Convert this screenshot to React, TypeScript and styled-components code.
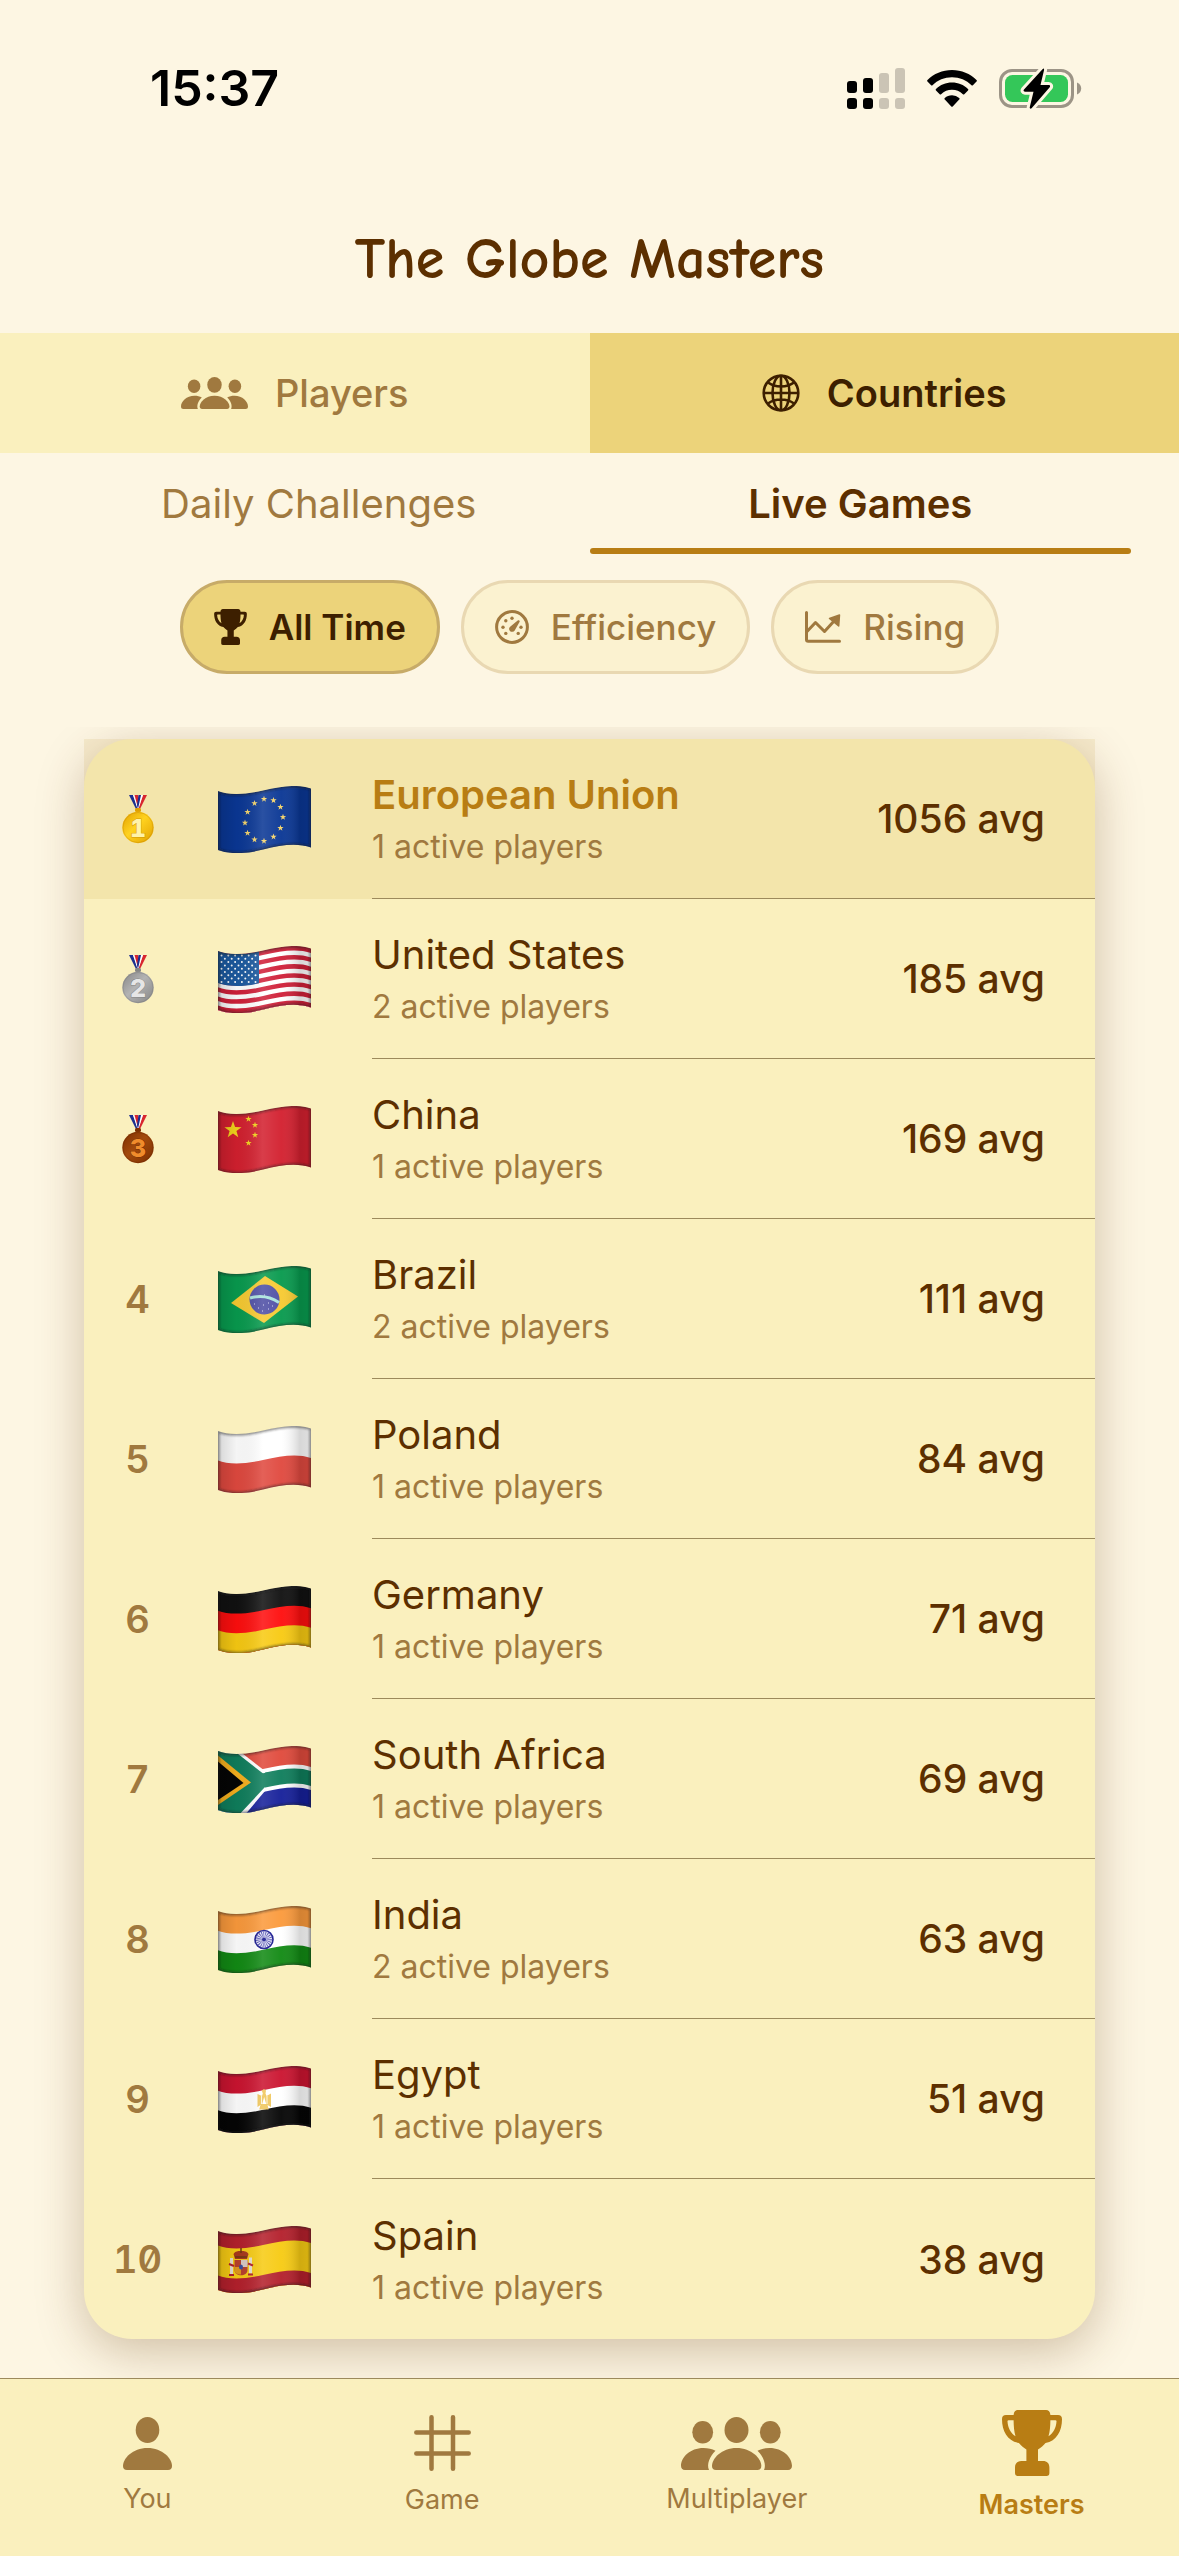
import React from 'react';
import styled, { createGlobalStyle } from 'styled-components';

const GlobalStyle = createGlobalStyle`
    *{
        box-sizing: border-box;
    }
    body{
        margin: 0;
        background: #fdf6e3;
        font-family: Inter, Roboto, "Liberation Sans", sans-serif;
        color: #5c2f00;
    }
    button{
        font: inherit;
        cursor: pointer;
    }
    svg{
        display: block;
        flex: none;
    }
`

const Page = styled.div`
    min-height: 100vh;
    display: flex;
    flex-direction: column;
`

const StatusBar = styled.div`
    display: flex;
    justify-content: space-between;
    align-items: center;
    height: 176px;
    padding: 0 97px 0 150px;
    color: #000;
`

const Clock = styled.div`
    font-size: 50px;
    font-weight: 600;
`

const StatusIcons = styled.div`
    display: flex;
    align-items: center;
    gap: 22px;
`

const Title = styled.h1`
    margin: 0;
    height: 157px;
    line-height: 168px;
    text-align: center;
    font-family: "Comic Neue", "Chalkboard SE", Lato, sans-serif;
    font-size: 58px;
    font-weight: 700;
`

const MainTabs = styled.div`
    display: grid;
    grid-template-columns: 1fr 1fr;
`

const MainTab = styled.button<{ $active?: boolean }>`
    display: flex;
    align-items: center;
    justify-content: center;
    gap: 27px;
    height: 120px;
    border: 0;
    font-size: 38px;
    font-weight: ${p => p.$active ? 600 : 500};
    color: ${p => p.$active ? '#3d1f00' : '#a0793f'};
    background: ${p => p.$active ? '#ecd37a' : '#faf0be'};
`

const SubTabs = styled.div`
    display: grid;
    grid-template-columns: 1fr 1fr;
    padding: 0 48px;
`

const SubTab = styled.button<{ $active?: boolean }>`
    height: 99px;
    padding: 26px 0 0;
    border: 0;
    background: none;
    font-size: 40px;
    font-weight: ${p => p.$active ? 600 : 400};
    color: ${p => p.$active ? '#5c2f00' : '#a0793f'};
    &::after{
        content: '';
        display: block;
        height: 6px;
        margin-top: 20px;
        border-radius: 3px;
        background: ${p => p.$active ? '#b87d14' : 'transparent'};
    }
`

const Filters = styled.div`
    display: flex;
    justify-content: center;
    gap: 21px;
    padding: 28px 0 53px;
`

const Filter = styled.button<{ $active?: boolean }>`
    display: flex;
    align-items: center;
    gap: 22px;
    height: 94px;
    padding: 0 31px;
    border: 3px solid ${p => p.$active ? '#c7ab68' : '#e9d8b2'};
    border-radius: 47px;
    font-size: 35px;
    font-weight: ${p => p.$active ? 600 : 500};
    color: ${p => p.$active ? '#3d1f00' : '#a0793f'};
    background: ${p => p.$active ? '#ecd37a' : '#fbf2d0'};
`

const Board = styled.main`
    flex: 1;
    overflow: hidden;
    padding: 12px 84px 39px;
`

const Table = styled.table`
    width: 100%;
    border-spacing: 0;
    border-radius: 48px;
    background: #faf0be;
    box-shadow: 0 12px 48px rgba(91, 46, 0, 0.28);
`

const Row = styled.tr<{ $own?: boolean }>`
    height: 160px;
    background: ${p => p.$own ? 'rgba(184, 134, 11, 0.1)' : 'none'};
    td{
        padding: 0;
    }
    &:last-child td{
        border-bottom: 0;
    }
`

const RankCell = styled.td`
    width: 107px;
    text-align: center;
    font-size: 38px;
    font-weight: 600;
    font-feature-settings: "tnum", "zero";
    color: #a0793f;
    svg{
        margin: 0 auto;
    }
`

const FlagCell = styled.td`
    width: 181px;
    svg{
        margin-left: 27px;
    }
`

const NameCell = styled.td`
    border-bottom: 1px solid #9c8a5c;
`

const Country = styled.div<{ $own?: boolean }>`
    padding-top: 3px;
    font-size: 40px;
    line-height: 48px;
    font-weight: ${p => p.$own ? 600 : 400};
    color: ${p => p.$own ? '#b87d14' : '#5c2f00'};
`

const Active = styled.div`
    margin-top: 6px;
    font-size: 32px;
    line-height: 44px;
    color: #a0793f;
`

const ScoreCell = styled.td`
    border-bottom: 1px solid #9c8a5c;
    text-align: right;
    font-size: 39px;
    font-weight: 500;
    div{
        padding-right: 50px;
    }
`

const TabBar = styled.nav`
    display: grid;
    grid-template-columns: repeat(4, 1fr);
    height: 178px;
    padding: 0 0 4px;
    border-top: 1px solid #9c8a5c;
    background: #faf0be;
`

const TabLink = styled.a<{ $active?: boolean }>`
    display: flex;
    flex-direction: column;
    align-items: center;
    justify-content: center;
    gap: 13px;
    font-size: 27px;
    line-height: 32px;
    font-weight: ${p => p.$active ? 600 : 400};
    color: ${p => p.$active ? '#b87d14' : '#a0793f'};
    text-decoration: none;
`

function SignalIcon(){
    const tops = [13, 10, 5, 0];
    return(
        <svg width="58" height="41" viewBox="0 0 58 41">
            {tops.map((top, i) => (
                <g key={i} fill={i < 2 ? '#000' : '#cbc4b5'}>
                    <rect x={i * 16} y={top} width="10" height={25 - top} rx="3" />
                    <rect x={i * 16} y="30" width="10" height="11" rx="3" />
                </g>
            ))}
        </svg>
    );
}

function WifiIcon(){
    return(
        <svg width="50" height="37" viewBox="0 0 50 37">
            <path d="M25 0C15.500 0 6.700 3.800 .5 10a1 1 0 0 0 0 1.500l3.600 3.700a1 1 0 0 0 1.400 0C10.600 10.300 17.500 7.300 25 7.300s14.400 3 19.500 7.900a1 1 0 0 0 1.400 0l3.600-3.700a1 1 0 0 0 0-1.500C43.300 3.800 34.500 0 25 0z" />
            <path d="M25 12.600c-6.200 0-11.800 2.400-16 6.400a1 1 0 0 0 0 1.500l3.700 3.700a1 1 0 0 0 1.400 0 15.800 15.800 0 0 1 21.800 0 1 1 0 0 0 1.400 0l3.700-3.700a1 1 0 0 0 0-1.500c-4.200-4-9.800-6.400-16-6.400z" />
            <path d="M25 25.300c-2.800 0-5.300 1-7.200 2.700a1 1 0 0 0 0 1.500l6.500 7a1 1 0 0 0 1.400 0l6.500-7a1 1 0 0 0 0-1.500 10.800 10.800 0 0 0-7.200-2.700z" />
        </svg>
    );
}

function BatteryIcon(){
    const bolt = 'M43.500 1.200L25 21.500c-.9 1-.3 2.200 1 2.200h8.500L30.800 39c-.4 1.700.9 2.300 2 1L50.700 19.300c.8-1 .3-2.200-1-2.200h-8.200L45 2.200c.4-1.700-.5-2.100-1.500-1z';
    return(
        <svg width="83" height="41" viewBox="0 0 83 41">
            <rect x="1.500" y="2.500" width="72" height="36" rx="11.500" fill="none" stroke="#9c9486" strokeWidth="3" />
            <path d="M78 14.500c2.500 1 4.200 3.300 4.200 6s-1.700 5-4.200 6z" fill="#9c9486" />
            <rect x="6" y="7" width="63" height="27" rx="7.500" fill="#34c759" />
            <path d={bolt} fill="#fdf6e3" stroke="#fdf6e3" strokeWidth="6" strokeLinejoin="round" />
            <path d={bolt} />
        </svg>
    );
}

function PeopleIcon({ width, height }: { width: number; height: number }){
    return(
        <svg width={width} height={height} viewBox="0 0 111 53" fill="currentColor">
            <ellipse cx="21.700" cy="15.300" rx="10.400" ry="11.300" />
            <ellipse cx="89.300" cy="15.300" rx="10.400" ry="11.300" />
            <ellipse cx="55.500" cy="13" rx="12" ry="13" />
            <path d="M35 53c-2.600 0-4-1.400-4-4 0-7.500 9.500-18 24.500-18S80.300 41.500 80.300 49c0 2.600-1.400 4-4 4z" />
            <path d="M34.500 33.800C31 32 27 31 22.500 31 9 31 0 40.500 0 48.800 0 51.500 1.400 53 4 53h24c-2.500-5.500.5-13.500 6.500-19.200z" />
            <path d="M76.500 33.800C80 32 84 31 88.500 31c13.500 0 22.500 9.500 22.500 17.800 0 2.700-1.400 4.200-4 4.200H83c2.500-5.500-.5-13.500-6.500-19.200z" />
        </svg>
    );
}

function PersonIcon(){
    return(
        <svg width="49" height="53" viewBox="0 0 49 53" fill="currentColor">
            <ellipse cx="24.500" cy="13" rx="11.800" ry="13" />
            <path d="M4 53c-2.600 0-4-1.400-4-4 0-7.500 9.500-18 24.500-18S49 41.500 49 49c0 2.600-1.400 4-4 4z" />
        </svg>
    );
}

function TrophyIcon({ width, height }: { width: number; height: number }){
    return(
        <svg width={width} height={height} viewBox="0 0 60 66" fill="currentColor">
            <path fillRule="evenodd" d="M16 0h28c2.500 0 4.200 1.800 4.400 5H56c2.600 0 4 1.400 4 4.200C60 21 54.500 31 43.500 33c-2 2.600-4.500 4.400-7.500 6.500V51h5c4 0 6.400 2.400 6.400 6.400V63c0 2-1 3-3 3H16c-2 0-3-1-3-3v-5.600c0-4 2.400-6.400 6.400-6.400h5V39.500c-3-2.100-5.500-3.900-7.500-6.500C5.500 31 0 21 0 9.200 0 6.400 1.400 5 4 5h7.600C11.800 1.800 13.500 0 16 0zM6.600 10.300c-.8 0-1.200.4-1.100 1.200.4 6 3 11.500 8 14.700C12 21.500 11.700 16 11.600 10.300zM53.400 10.300h-5c-.1 5.700-.4 11.200-1.900 15.900 5-3.200 7.600-8.700 8-14.700.1-.8-.3-1.200-1.100-1.200z" />
        </svg>
    );
}

function GlobeIcon(){
    return(
        <svg width="38" height="38" viewBox="0 0 38 38" fill="none" stroke="currentColor" strokeWidth="2.600">
            <circle cx="19" cy="19" r="17.300" />
            <ellipse cx="19" cy="19" rx="8.500" ry="17.300" />
            <path d="M19 2v34M2 19h34M6 8.500c7 5.300 19 5.300 26 0M6 29.500c7-5.300 19-5.300 26 0" />
        </svg>
    );
}

function GaugeIcon(){
    return(
        <svg width="34" height="34" viewBox="0 0 34 34" fill="currentColor">
            <circle cx="17" cy="17" r="15.400" fill="none" stroke="currentColor" strokeWidth="3" />
            <path d="M24.300 10.600c-.5-.5-1-.4-1.600 0l-7 5.600a3 3 0 1 0 4 4.200l4.800-8.300c.3-.6.300-1-.2-1.500z" />
            <circle cx="17" cy="8.200" r="1.700" />
            <circle cx="10.800" cy="10.800" r="1.700" />
            <circle cx="8" cy="17.200" r="1.700" />
            <circle cx="26" cy="17.200" r="1.700" />
            <circle cx="10.800" cy="23.400" r="1.700" />
            <circle cx="23.200" cy="23.400" r="1.700" />
        </svg>
    );
}

function RisingIcon(){
    return(
        <svg width="36" height="32" viewBox="0 0 36 32" fill="none" stroke="currentColor" strokeWidth="3" strokeLinecap="round" strokeLinejoin="round">
            <path d="M1.500 1.500v27c0 1.200.5 1.700 1.700 1.700h31.300" />
            <path d="M2 20.500l8.500-9 9 9L30 9" />
            <path d="M24.500 7.500L34.500 4l-.8 11z" fill="currentColor" strokeWidth="1.500" />
        </svg>
    );
}

function HashIcon(){
    return(
        <svg width="57" height="56" viewBox="0 0 57 56" stroke="currentColor" strokeWidth="4.500" strokeLinecap="round">
            <path d="M17.500 2.300v51.400M39 2.300v51.400M2.300 17.500h52.400M2.300 38.500h52.400" />
        </svg>
    );
}

const medals = [
    { light: '#ffd21f', dark: '#e0a000', digit: '#fff3a8', edge: '#b87800' },
    { light: '#b3b3b3', dark: '#858585', digit: '#e6e6e6', edge: '#6c6c6c' },
    { light: '#a34a0c', dark: '#7c2f02', digit: '#f08c2c', edge: '#5d2200' },
];

function Medal({ place }: { place: number }){
    const medal = medals[place - 1];
    return(
        <svg width="32" height="49" viewBox="0 0 32 49" role="img" aria-label={`Place ${place}`}>
            <defs>
                <linearGradient id={`medal${place}`} x1="0" y1="0" x2="1" y2="1">
                    <stop offset="0" stopColor={medal.dark} />
                    <stop offset="0.450" stopColor={medal.light} />
                    <stop offset="1" stopColor={medal.dark} />
                </linearGradient>
            </defs>
            <path d="M7 0h4l5 14h-2z" fill="#1d2f8f" />
            <path d="M11 0h2l3.500 12-1 2z" fill="#fff" />
            <path d="M12.500 0H16l1.500 9-1.500 4z" fill="#d8262f" />
            <path d="M25 0h-4l-5 14h2z" fill="#d8262f" />
            <path d="M21 0h-2l-3.500 12 1 2z" fill="#fff" />
            <path d="M19 0h-2.500L15 10l1 4z" fill="#1d2f8f" />
            <rect x="13" y="13" width="6" height="4" rx="1.500" fill={medal.dark} />
            <circle cx="16" cy="32.500" r="15.700" fill={`url(#medal${place})`} />
            <circle cx="16" cy="32.500" r="15" fill="none" stroke={medal.edge} strokeOpacity="0.300" strokeWidth="1" />
            <text x="16" y="41.500" textAnchor="middle" fontSize="25" fontWeight="800" fill={medal.digit} stroke={medal.edge} strokeOpacity="0.600" strokeWidth="1" paintOrder="stroke">{place}</text>
        </svg>
    );
}

// upper edge of a band that starts y below the top of the cloth
const wave = (y: number) => `M0 ${5 + y}C10 ${9 + y} 26 ${9 + y} 45 ${4.5 + y}S80 ${y - 2} 93 ${2.5 + y}`;
const cloth = 'M0 5C10 9 26 9 45 4.500S80 -2 93 2.500V61.500C80 57 64 58.500 45 63.500S10 68 0 64z';

function Bands({ colors, at }: { colors: string[]; at?: number[] }){
    return(
        <>
            {colors.map((color, i) => (
                <path key={i} d={`${wave(at ? at[i] : i * 59 / colors.length)}V80H0z`} fill={color} />
            ))}
        </>
    );
}

function starPoints(cx: number, cy: number, r: number){
    return Array.from({ length: 10 }, (_, i) => {
        const angle = Math.PI * i / 5 - Math.PI / 2;
        const size = i % 2 ? r * 0.4 : r;
        return `${cx + size * Math.cos(angle)},${cy + size * Math.sin(angle)}`;
    }).join(' ');
}

function Star({ cx, cy, r, fill }: { cx: number; cy: number; r: number; fill: string }){
    return <polygon points={starPoints(cx, cy, r)} fill={fill} />;
}

const flags: Record<string, React.ReactNode> = {
    eu: (
        <>
            <Bands colors={['#0a3795']} />
            {Array.from({ length: 12 }, (_, i) => {
                const x = 19 * Math.sin(Math.PI * i / 6);
                return <Star key={i} cx={46 + x} cy={34 - x * 0.15 - 21 * Math.cos(Math.PI * i / 6)} r={3.3} fill="#f5d469" />;
            })}
        </>
    ),
    us: (
        <>
            <Bands colors={Array.from({ length: 13 }, (_, i) => i % 2 ? '#ffffff' : '#d02039')} />
            <path d="M0 5C10 9 26 9 41 5.500V37.300C26 41 10 41 0 37z" fill="#1c5aa0" />
            {Array.from({ length: 9 }, (_, row) => (
                Array.from({ length: row % 2 ? 5 : 6 }, (_, i) => (
                    <circle key={`${row}-${i}`} cx={3.5 + i * 6.8 + (row % 2 ? 3.4 : 0)} cy={9.5 + row * 3.3} r="1" fill="#fff" />
                ))
            ))}
        </>
    ),
    cn: (
        <>
            <Bands colors={['#d3202f']} />
            <Star cx={15} cy={24} r={9} fill="#f3d41c" />
            <Star cx={30.5} cy={13} r={3.3} fill="#f3d41c" />
            <Star cx={37} cy={19} r={3.3} fill="#f3d41c" />
            <Star cx={37} cy={29} r={3.3} fill="#f3d41c" />
            <Star cx={30.5} cy={37} r={3.3} fill="#f3d41c" />
        </>
    ),
    br: (
        <>
            <Bands colors={['#089a4e']} />
            <path d="M13 37L47 10l33 20.500L46 57z" fill="#f7ca31" />
            <circle cx="46.500" cy="33.500" r="15" fill="#4f4fa5" />
            <path d="M32 32c10-3 20-1.500 29 4.500" fill="none" stroke="#a8e2dc" strokeWidth="3" />
            <path d="M36 38h1M40 42h1M45 39h1M50 43h1M54 40h1M44 45h1M50 37h1M46 29h1" stroke="#d9d9f5" strokeWidth="1.200" />
        </>
    ),
    pl: <Bands colors={['#ffffff', '#e0493f']} />,
    de: <Bands colors={['#111111', '#ff0e0e', '#f8ca12']} />,
    za: (
        <>
            <Bands colors={['#e04a3c', '#ffffff', '#0f7e5c', '#ffffff', '#16209a']} at={[0, 18.5, 22.5, 37.5, 41.5]} />
            <path d="M0 4h20l27 21v20L26 70H0z" fill="#fff" />
            <path d="M0 4h15l32 25v12L20 70H0z" fill="#0f7e5c" />
            <path d="M44 27.500l6-1.200v14.300l-6 1z" fill="#0f7e5c" />
            <path d="M0 9.500L33 36.500 0 59z" fill="#f6b01e" />
            <path d="M0 15.500L25.500 37 0 54z" fill="#050505" />
        </>
    ),
    in: (
        <>
            <Bands colors={['#fb9a3c', '#ffffff', '#128a14']} />
            <circle cx="46" cy="33.500" r="9" fill="#e9e9f8" stroke="#12128c" strokeWidth="1.600" />
            <circle cx="46" cy="33.500" r="5" fill="none" stroke="#4747aa" strokeWidth="6" strokeDasharray="0.700 0.900" />
            <circle cx="46" cy="33.500" r="2" fill="#12128c" />
        </>
    ),
    eg: (
        <>
            <Bands colors={['#cb1430', '#ffffff', '#050505']} />
            <path d="M39.500 28l4.500 2 .8-2.500-1-3 2.200-1.500 2 1.500-.5 3 1 2.500 4.500-2.500v13.500l-3.500-2 1.200 4.500h-9.500l1.300-4.500-3 2z" fill="#f0c65a" />
            <path d="M43.500 30v8M49 30v8" stroke="#fff" strokeWidth="0.800" />
            <path d="M46.200 31l-2 7h4z" fill="#fff" />
        </>
    ),
    es: (
        <>
            <Bands colors={['#b4202c', '#f7cb13', '#b4202c']} at={[0, 14.5, 44.5]} />
            <path d="M12 32h3v16h-3zM31 31.500h3v16h-3z" fill="#e8e0d0" />
            <path d="M11 38l5 2M30 37.500l5 2M11 49h5M30 48.500h5" stroke="#b4202c" strokeWidth="2" />
            <path d="M16.500 34h13v10c0 7-13 7-13 0z" fill="#b8402c" />
            <path d="M23 34h6.500v7H23z" fill="#d9c9c4" />
            <path d="M16.500 41H23v7.500c-4 0-6.500-1.500-6.500-4.500z" fill="#e0981c" />
            <ellipse cx="23" cy="41" rx="2" ry="2.500" fill="#3c4c9c" />
            <path d="M17 33l-1.500-5c2-3 4-3 7.500-3s5.500 0 7.500 3L29 33z" fill="#a83a1c" />
            <path d="M17 31h12M23 22v5" stroke="#6c3a10" strokeWidth="1.500" />
        </>
    ),
};

function Flag({ code, name }: { code: string; name: string }){
    return(
        <svg width="93" height="67" viewBox="0 0 93 67" role="img" aria-label={name}>
            <defs>
                <clipPath id={`cloth-${code}`}>
                    <path d={cloth} />
                </clipPath>
                <linearGradient id={`fold-${code}`}>
                    <stop offset="0" stopColor="#000" stopOpacity="0.160" />
                    <stop offset="0.200" stopColor="#000" stopOpacity="0.040" />
                    <stop offset="0.480" stopColor="#fff" stopOpacity="0.130" />
                    <stop offset="0.680" stopColor="#fff" stopOpacity="0.040" />
                    <stop offset="0.880" stopColor="#000" stopOpacity="0.160" />
                    <stop offset="1" stopColor="#000" stopOpacity="0.120" />
                </linearGradient>
                <filter id={`soft-${code}`}>
                    <feGaussianBlur stdDeviation="1.300" />
                </filter>
            </defs>
            <g clipPath={`url(#cloth-${code})`}>
                {flags[code]}
                <path d={cloth} fill={`url(#fold-${code})`} />
                <path d={cloth} fill="none" stroke="#222" strokeOpacity="0.500" strokeWidth="3" filter={`url(#soft-${code})`} />
            </g>
        </svg>
    );
}

const countries = [
    { code: 'eu', name: 'European Union', players: 1, score: 1056 },
    { code: 'us', name: 'United States', players: 2, score: 185 },
    { code: 'cn', name: 'China', players: 1, score: 169 },
    { code: 'br', name: 'Brazil', players: 2, score: 111 },
    { code: 'pl', name: 'Poland', players: 1, score: 84 },
    { code: 'de', name: 'Germany', players: 1, score: 71 },
    { code: 'za', name: 'South Africa', players: 1, score: 69 },
    { code: 'in', name: 'India', players: 2, score: 63 },
    { code: 'eg', name: 'Egypt', players: 1, score: 51 },
    { code: 'es', name: 'Spain', players: 1, score: 38 },
];

function App(){
    const [tab, setTab] = React.useState('countries');
    const [mode, setMode] = React.useState('live');
    const [filter, setFilter] = React.useState('all');

    return(
        <Page>
            <GlobalStyle />
            <StatusBar>
                <Clock>15:37</Clock>
                <StatusIcons>
                    <SignalIcon />
                    <WifiIcon />
                    <BatteryIcon />
                </StatusIcons>
            </StatusBar>
            <Title>The Globe Masters</Title>
            <MainTabs>
                <MainTab $active={tab === 'players'} onClick={() => setTab('players')}>
                    <PeopleIcon width={67} height={32} />
                    Players
                </MainTab>
                <MainTab $active={tab === 'countries'} onClick={() => setTab('countries')}>
                    <GlobeIcon />
                    Countries
                </MainTab>
            </MainTabs>
            <SubTabs>
                <SubTab $active={mode === 'daily'} onClick={() => setMode('daily')}>Daily Challenges</SubTab>
                <SubTab $active={mode === 'live'} onClick={() => setMode('live')}>Live Games</SubTab>
            </SubTabs>
            <Filters>
                <Filter $active={filter === 'all'} onClick={() => setFilter('all')}>
                    <TrophyIcon width={33} height={36} />
                    All Time
                </Filter>
                <Filter $active={filter === 'efficiency'} onClick={() => setFilter('efficiency')}>
                    <GaugeIcon />
                    Efficiency
                </Filter>
                <Filter $active={filter === 'rising'} onClick={() => setFilter('rising')}>
                    <RisingIcon />
                    Rising
                </Filter>
            </Filters>
            <Board>
                <Table>
                    <tbody>
                        {countries.map((country, i) => (
                            <Row key={country.code} $own={i === 0}>
                                <RankCell>{i < 3 ? <Medal place={i + 1} /> : i + 1}</RankCell>
                                <FlagCell><Flag code={country.code} name={country.name} /></FlagCell>
                                <NameCell>
                                    <Country $own={i === 0}>{country.name}</Country>
                                    <Active>{country.players} active players</Active>
                                </NameCell>
                                <ScoreCell><div>{country.score} avg</div></ScoreCell>
                            </Row>
                        ))}
                    </tbody>
                </Table>
            </Board>
            <TabBar>
                <TabLink href="#you"><PersonIcon />You</TabLink>
                <TabLink href="#game"><HashIcon />Game</TabLink>
                <TabLink href="#multiplayer"><PeopleIcon width={111} height={53} />Multiplayer</TabLink>
                <TabLink href="#masters" $active><TrophyIcon width={60} height={66} />Masters</TabLink>
            </TabBar>
        </Page>
    );
}

export default App;
